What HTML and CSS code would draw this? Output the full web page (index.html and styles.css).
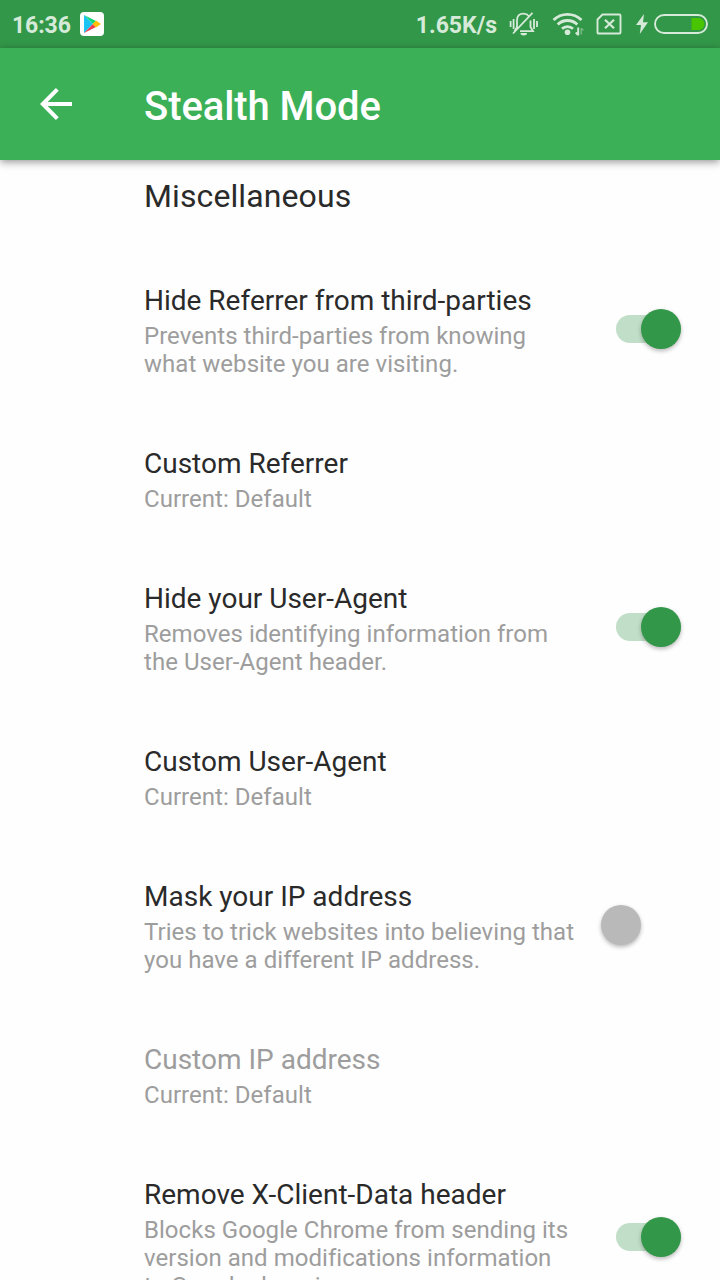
FILE: index.html
```html
<!DOCTYPE html>
<html lang="en">
<head>
<meta charset="utf-8">
<title>Stealth Mode</title>
<link rel="stylesheet" href="styles.css">
</head>
<body>
<div class="screen">
  <div class="statusbar">
    <span class="clock">16:36</span>
    <svg class="play" width="24" height="24" viewBox="0 0 24 24">
      <rect width="24" height="24" rx="4" fill="#fff"/>
      <path d="M4 3v18l9-9z" fill="#1cc4f4"/>
      <path d="M4 3l9 9 3-3z" fill="#10d87c"/>
      <path d="M4 21l9-9 3 3z" fill="#f33b50"/>
      <path d="M16 8.600l5 3.400-5 3.400-3.500-3.400z" fill="#ffc107"/>
    </svg>
    <span class="speed">1.65K/s</span>
    <svg class="bell" width="30" height="26" viewBox="0 0 30 26" fill="none" stroke="#d6ead9" stroke-width="1.800">
      <path d="M8 17V9.500C8 5 10.500 2.700 14.500 2.700c2.500 0 4.300 1 5.500 2.500M21.500 9.500V16l2.500 4.200H11M4 22.500L23.500 1.800"/>
      <path d="M8 16l-2.500 4.200" />
      <path d="M11.500 22h6.500a3.250 2.500 0 0 1-6.500 0z" fill="#d6ead9" stroke="none"/>
      <path d="M1.600 10v6M4.600 8v10M25 8v10M28 10v6"/>
    </svg>
    <svg class="wifi" width="32" height="26" viewBox="0 0 32 26" fill="none" stroke="#d6ead9" stroke-width="2.800">
      <path d="M1.500 9a20 20 0 0 1 28 0M5.700 13.500a14 14 0 0 1 19.600 0M10 17.800a8 8 0 0 1 11 0"/>
      <circle cx="15.500" cy="21.200" r="2.800" fill="#d6ead9" stroke="none"/>
      <path d="M26.200 16.500v8M23.700 21.500l2 2" stroke-width="1.900"/>
      <path d="M29.200 17v6.500M29.500 17.500l2 2" stroke-width="1.500" opacity=".4"/>
    </svg>
    <svg class="sim" width="26" height="22" viewBox="0 0 26 22" fill="none" stroke="#d6ead9" stroke-width="1.900">
      <path d="M6.500 1.500H23.500a1 1 0 0 1 1 1V19.500a1 1 0 0 1-1 1H2.500a1 1 0 0 1-1-1V6.500z"/>
      <path d="M9 6.700l9 8.600M18 6.700L9 15.300" stroke-width="2.200"/>
    </svg>
    <svg class="bolt" width="12" height="20" viewBox="0 0 12 20"><path d="M8 0L0 11h5L3.800 20 12 8.200H7z" fill="#d6ead9"/></svg>
    <svg class="battery" width="54" height="20" viewBox="0 0 54 20">
      <rect x="1" y="1" width="52" height="18" rx="9" fill="none" stroke="#d6ead9" stroke-width="1.900"/>
      <path d="M37.500 4H44.500a6 6 0 0 1 0 12h-7z" fill="#48c400"/>
    </svg>
  </div>
  <div class="toolbar">
    <svg class="back" width="32" height="32" viewBox="0 0 32 32" fill="none" stroke="#fff" stroke-width="4"><path d="M32 16H3M17.300 1.400L2.800 16l14.500 14.600"/></svg>
    <h1 class="title">Stealth Mode</h1>
  </div>
  <div class="list">
    <h2 class="section">Miscellaneous</h2>
    <div class="row">
      <div class="text"><div class="name">Hide Referrer from third-parties</div><div class="summary">Prevents third-parties from knowing<br>what website you are visiting.</div></div>
      <div class="switch on"><div class="thumb"></div></div>
    </div>
    <div class="row">
      <div class="text"><div class="name">Custom Referrer</div><div class="summary">Current: Default</div></div>
    </div>
    <div class="row">
      <div class="text"><div class="name">Hide your User-Agent</div><div class="summary">Removes identifying information from<br>the User-Agent header.</div></div>
      <div class="switch on"><div class="thumb"></div></div>
    </div>
    <div class="row">
      <div class="text"><div class="name">Custom User-Agent</div><div class="summary">Current: Default</div></div>
    </div>
    <div class="row">
      <div class="text"><div class="name">Mask your IP address</div><div class="summary">Tries to trick websites into believing that<br>you have a different IP address.</div></div>
      <div class="switch"><div class="thumb"></div></div>
    </div>
    <div class="row disabled">
      <div class="text"><div class="name">Custom IP address</div><div class="summary">Current: Default</div></div>
    </div>
    <div class="row">
      <div class="text"><div class="name">Remove X-Client-Data header</div><div class="summary">Blocks Google Chrome from sending its<br>version and modifications information<br>to Google domains.</div></div>
      <div class="switch on"><div class="thumb"></div></div>
    </div>
  </div>
</div>
</body>
</html>
```
FILE: styles.css
```css
body { margin: 0; }
.screen {
  width: 720px;
  height: 1280px;
  overflow: hidden;
  display: flex;
  flex-direction: column;
  background: #fefefe;
  font-family: Roboto, "Liberation Sans", sans-serif;
  color: #2a2a2a;
}
.statusbar {
  height: 48px;
  flex: none;
  box-sizing: border-box;
  padding: 0 12px;
  display: flex;
  align-items: center;
  background: #329748;
  color: #d6ead9;
  font-size: 23px;
  font-weight: 700;
  line-height: 28px;
}
.clock { width: 68px; padding-top: 3px; letter-spacing: -.1px; }
.speed { margin-left: auto; padding-top: 3px; }
.bell { margin-left: 12px; }
.wifi { margin-left: 13px; }
.sim { margin-left: 12px; }
.bolt { margin-left: 14px; }
.battery { margin-left: 6px; }
.statusbar svg { flex: none; }
.toolbar {
  height: 112px;
  flex: none;
  box-sizing: border-box;
  padding-left: 40px;
  display: flex;
  align-items: center;
  background: #3cb057;
  color: #fff;
  box-shadow: 0 2px 8px rgba(0, 0, 0, .42);
  z-index: 1;
}
.title { margin: 6px 0 0 72px; font-size: 40px; font-weight: 500; line-height: 48px; letter-spacing: -.08px; }
.section { box-sizing: border-box; height: 88px; margin: 0; padding: 17px 0 0 144px; font-size: 32px; font-weight: 400; line-height: 38px; letter-spacing: .1px; }
.row { display: flex; align-items: center; padding: 33px 39px 34px 144px; }
.text { flex: 1; margin: 1px 0 -1px; white-space: nowrap; }
.name { font-size: 28px; line-height: 38px; }
.summary { margin-top: 2px; font-size: 24px; line-height: 28px; letter-spacing: .035px; color: #9d9d9d; }
.disabled .name { color: #9d9d9d; }
.switch {
  width: 65px;
  height: 28px;
  flex: none;
  display: flex;
  align-items: center;
  border-radius: 14px;
}
.thumb {
  width: 40px;
  height: 40px;
  flex: none;
  margin-left: -15px;
  border-radius: 50%;
  background: #b9b9b9;
  box-shadow: 0 2px 4px rgba(0, 0, 0, .28);
}
.on { justify-content: flex-end; background: #c1dfc8; }
.on .thumb { background: #329748; }
```
